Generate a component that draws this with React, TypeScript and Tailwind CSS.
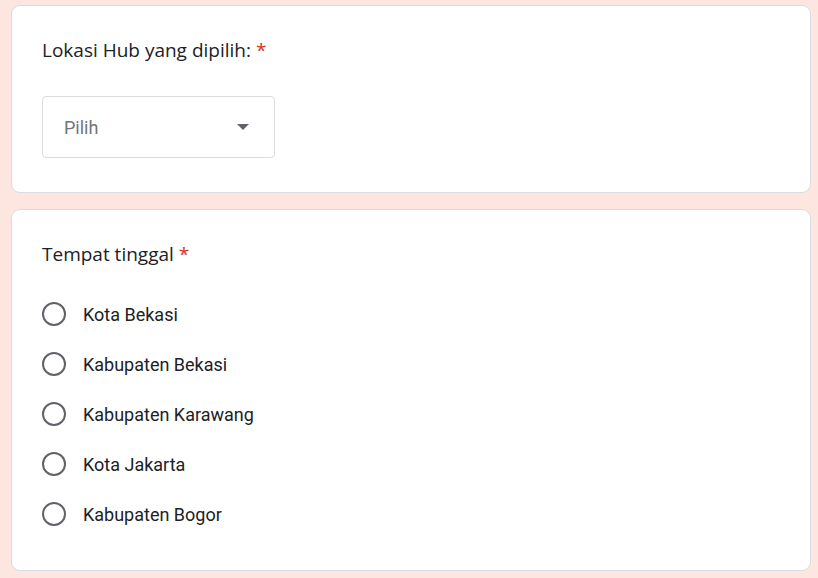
export default function App() {
  const options = [
    "Kota Bekasi",
    "Kabupaten Bekasi",
    "Kabupaten Karawang",
    "Kota Jakarta",
    "Kabupaten Bogor",
  ]

  return (
    <main className="min-h-[578px] w-[818px] bg-[#fde6df] pt-[5px] px-[11px] flex flex-col gap-4">

      {/* LOKASI HUB */}

      <section className="w-[800px] bg-white border border-[#dadce0] rounded-[9px] pt-[32px] pb-[34px] px-[30px]">

        <h2 className="text-[19px] leading-[24px] text-[#202124] font-['Open_Sans',sans-serif]">
          Lokasi Hub yang dipilih: <span className="text-[#d93025]">*</span>
        </h2>

        <div className="mt-[34px] w-[233px] h-[62px] border border-[#dadce0] rounded-[4px] flex items-center justify-between pl-[21px] pr-[25px]">
          <span className="text-[18px] text-[#70757a] font-['Roboto',sans-serif]">Pilih</span>
          <svg width="12" height="6" viewBox="0 0 12 6">
            <path d="M0 0 L12 0 L6 6 Z" fill="#5f6368" />
          </svg>
        </div>

      </section>

      {/* TEMPAT TINGGAL */}

      <section className="w-[800px] bg-white border border-[#dadce0] rounded-[9px] pt-[32px] pb-[31px] px-[30px]">

        <h2 className="text-[19px] leading-[24px] text-[#202124] font-['Open_Sans',sans-serif]">
          Tempat tinggal <span className="text-[#d93025]">*</span>
        </h2>

        <div className="mt-[23px] flex flex-col">
          {options.map((opt) => (
            <label key={opt} className="h-[50px] flex items-center gap-[17px]">
              <span className="w-6 h-6 rounded-full border-2 border-[#5f6368] shrink-0" />
              <span className="text-[18px] text-[#202124] font-['Roboto',sans-serif]">{opt}</span>
            </label>
          ))}
        </div>

      </section>

    </main>
  )
}
